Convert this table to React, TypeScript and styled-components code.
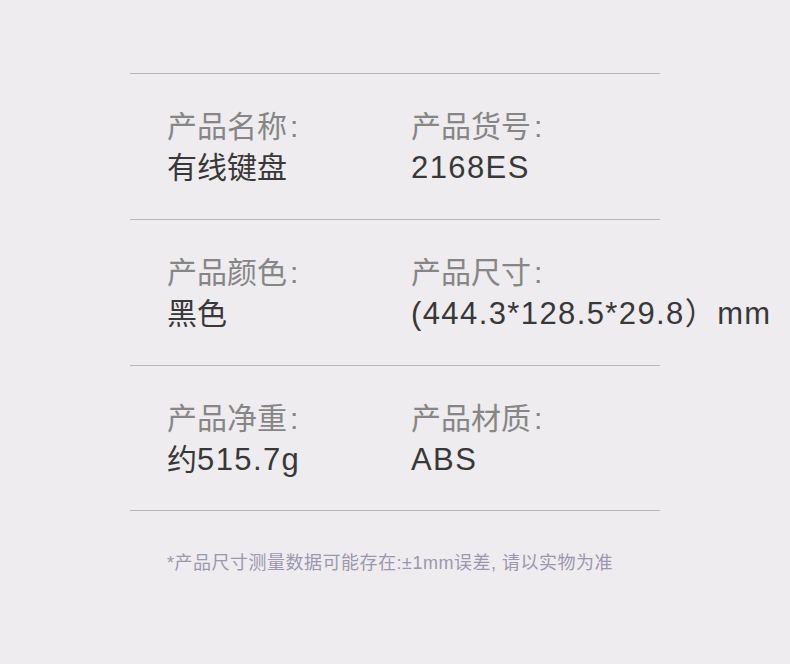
import React from "react";
import styled, { createGlobalStyle } from "styled-components";

const Global = createGlobalStyle`
  html, body { margin: 0; padding: 0; background: #eeecef; }
  body { font-family: "Liberation Sans", "Noto Sans CJK SC", sans-serif; }
`;

const Page = styled.div`
  width: 790px;
  height: 664px;
  background: #eeecef;
  padding-top: 73px;
  box-sizing: border-box;
  overflow: hidden;
`;

const Table = styled.div`
  margin-left: 130px;
  width: 530px;
  border-top: 1px solid #b8b6b9;
`;

const Row = styled.div`
  display: grid;
  grid-template-columns: 244px auto;
  height: 146px;
  box-sizing: border-box;
  padding: 32px 0 0 37px;
  border-bottom: 1px solid #b8b6b9;

  &:last-child {
    height: 145px;
  }
`;

const Cell = styled.div`
  display: flex;
  flex-direction: column;
  white-space: nowrap;
`;

const Label = styled.div`
  font-size: 30px;
  line-height: 41px;
  color: #868686;
`;

const Colon = styled.span`
  padding-left: 3px;
`;

const Value = styled.div`
  font-size: 31px;
  line-height: 41px;
  letter-spacing: 1.4px;
  color: #383838;
`;

const Cjk = styled.span`
  font-size: 30px;
  letter-spacing: 0;
`;

const Note = styled.div`
  margin: 40px 0 0 167px;
  font-size: 18px;
  line-height: 24px;
  letter-spacing: 0.5px;
  color: #9b98ad;
  white-space: nowrap;
`;

type Item = { label: string; cjk?: string; text?: string };

const rows: [Item, Item][] = [
  [
    { label: "产品名称", cjk: "有线键盘" },
    { label: "产品货号", text: "2168ES" },
  ],
  [
    { label: "产品颜色", cjk: "黑色" },
    { label: "产品尺寸", text: "(444.3*128.5*29.8）mm" },
  ],
  [
    { label: "产品净重", cjk: "约", text: "515.7g" },
    { label: "产品材质", text: "ABS" },
  ],
];

function Field({ item }: { item: Item }) {
  return (
    <Cell>
      <Label>
        {item.label}
        <Colon>:</Colon>
      </Label>
      <Value>
        {item.cjk && <Cjk>{item.cjk}</Cjk>}
        {item.text}
      </Value>
    </Cell>
  );
}

export default function App() {
  return (
    <Page>
      <Global />
      <Table>
        {rows.map((r, i) => (
          <Row key={i}>
            <Field item={r[0]} />
            <Field item={r[1]} />
          </Row>
        ))}
      </Table>
      <Note>*产品尺寸测量数据可能存在:±1mm误差, 请以实物为准</Note>
    </Page>
  );
}
